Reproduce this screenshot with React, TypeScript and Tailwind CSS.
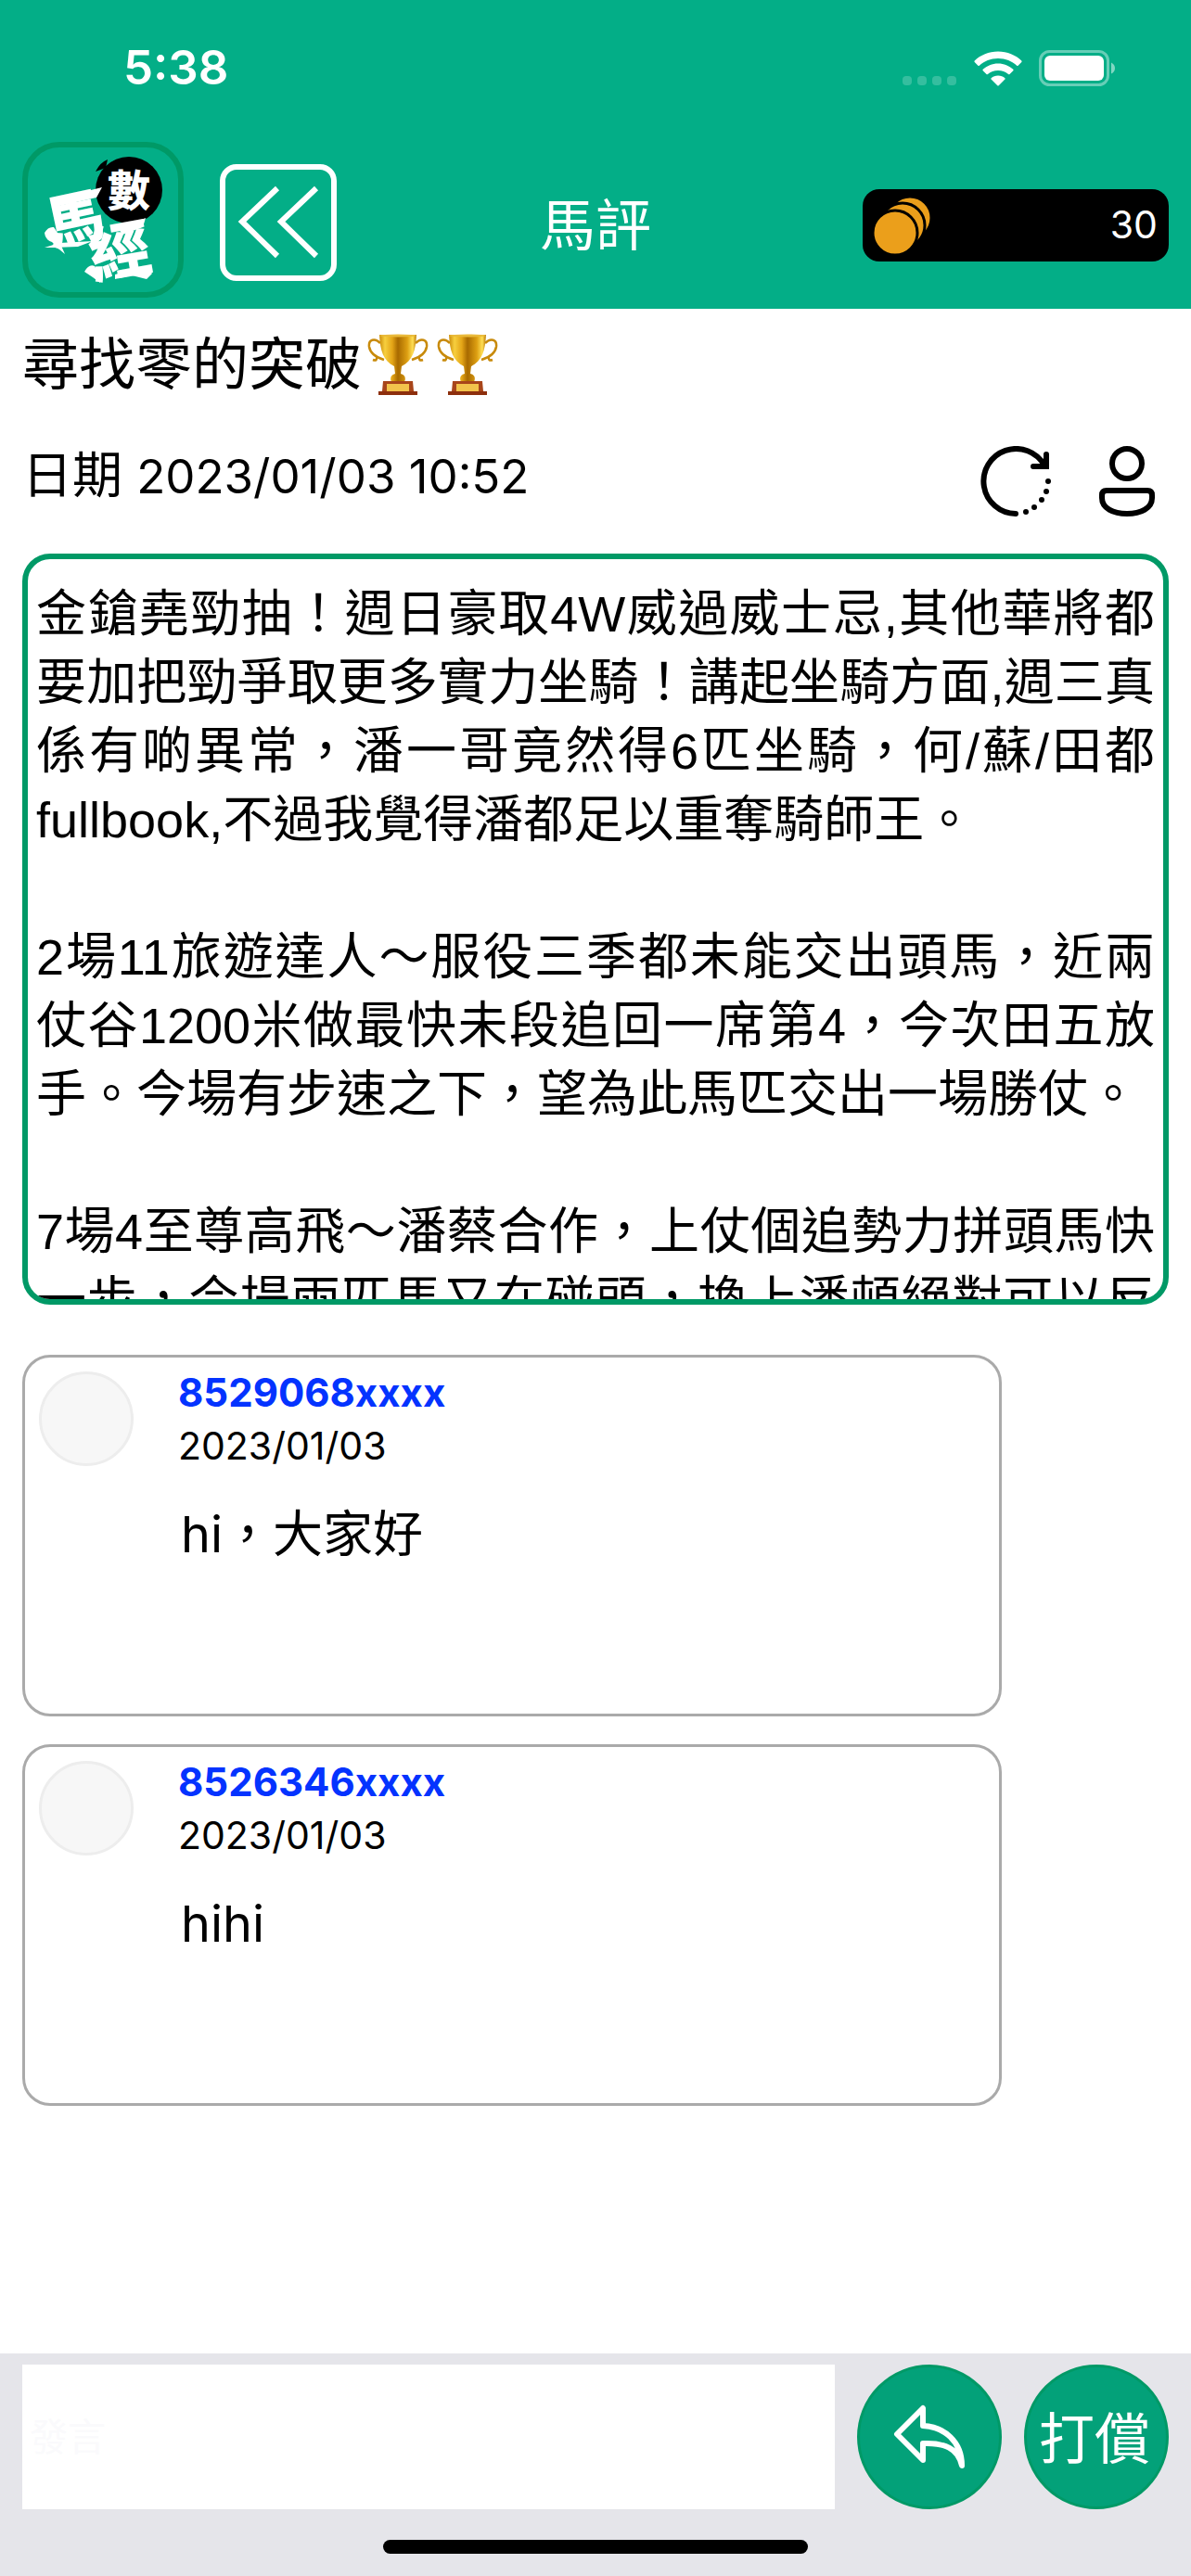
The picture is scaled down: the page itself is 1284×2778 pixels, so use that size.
import { useState } from "react";

interface IComment {
  id: number;
  author: string;
  date: string;
  message: string;
}

const comments: IComment[] = [
  { id: 1, author: "8529068xxxx", date: "2023/01/03", message: "hi，大家好" },
  { id: 2, author: "8526346xxxx", date: "2023/01/03", message: "hihi" },
];

const article = `金鎗堯勁抽！週日豪取4W威過威士忌,其他華將都要加把勁爭取更多實力坐騎！講起坐騎方面,週三真係有啲異常，潘一哥竟然得6匹坐騎，何/蘇/田都fullbook,不過我覺得潘都足以重奪騎師王。

2場11旅遊達人～服役三季都未能交出頭馬，近兩仗谷1200米做最快未段追回一席第4，今次田五放手。今場有步速之下，望為此馬匹交出一場勝仗。

7場4至尊高飛～潘蔡合作，上仗個追勢力拼頭馬快一步，今場兩匹馬又在碰頭，換上潘頓絕對可以反勝。`;

function StatusBar() {
  return (
    <div className="flex h-[147px] items-center justify-between pr-20 pl-[133px]">
      <span className="text-[51px] font-semibold">5:38</span>
      <div className="flex items-center">
        <svg className="h-10 w-[60px]" viewBox="0 0 60 40" fill="#fff" fillOpacity="0.2">
          <rect x="1" y="28" width="10" height="10" rx="4" />
          <rect x="17" y="28" width="10" height="10" rx="4" />
          <rect x="33" y="28" width="10" height="10" rx="4" />
          <rect x="49" y="28" width="10" height="10" rx="4" />
        </svg>
        <svg className="ml-[18px] h-[38px] w-[52px]" viewBox="0 0 52 38" fill="#fff">
          <path d="M26 0.5C36 0.5 45 4.400 51.300 10.500Q52 11.300 51.300 12L47.600 15.700Q46.900 16.300 46.200 15.700C41 11 34 8 26 8S11 11 5.800 15.700Q5.100 16.300 4.400 15.700L0.700 12Q0 11.300 0.700 10.500C7 4.400 16 0.500 26 0.500Z" />
          <path d="M26 13.500C32.400 13.500 38 16 42.300 19.800Q43 20.500 42.300 21.200L38.500 25Q37.800 25.600 37.100 25C34 22.500 30.200 21 26 21S18 22.500 14.900 25Q14.200 25.600 13.500 25L9.700 21.200Q9 20.500 9.700 19.800C14 16 19.600 13.500 26 13.500Z" />
          <path d="M26 26.500C28.900 26.500 31.400 27.500 33.400 29.200Q34.100 29.900 33.400 30.600L26.700 37.200Q26 37.800 25.300 37.200L18.600 30.600Q17.900 29.900 18.600 29.200C20.600 27.500 23.100 26.500 26 26.500Z" />
        </svg>
        <svg className="ml-[18px] h-10 w-[84px]" viewBox="0 0 84 40">
          <rect x="1.500" y="1.500" width="73" height="36" rx="10" fill="none" stroke="#fff" strokeOpacity="0.4" strokeWidth="3" />
          <rect x="6" y="6" width="64" height="27" rx="6" fill="#fff" />
          <path d="M78 13.500Q82 15.500 82 19.500T78 25.500Z" fill="#fff" fillOpacity="0.5" />
        </svg>
      </div>
    </div>
  );
}

function Logo() {
  return (
    <a
      href="#home"
      aria-label="數馬經"
      className="flex h-[168px] w-[174px] items-center justify-center rounded-[40px] border-6 border-[#009966]"
    >
      <svg viewBox="6 6 162 156" className="h-full w-full" fontWeight="900" textAnchor="middle">
        <circle cx="115" cy="52" r="36" fill="#000" />
        <path d="M79 32Q84 22 92 19L90 28Z" fill="#000" />
        <text x="115" y="69" fontSize="46" fill="#fff">數</text>
        <g fill="#fff">
          <text x="57" y="106" fontSize="62" transform="rotate(-12 57 85)">馬</text>
          <text x="105" y="142" fontSize="66" transform="rotate(-10 105 117)">經</text>
          {/* brush flicks around the lettering */}
          <path d="M33 61L62 55L86 49L80 60L36 70Z" />
          <path d="M24 98Q28 91 34 92L38 98L42 112L46 121L40 116L32 108Q25 106 24 98Z" />
          <path d="M24 114L40 109L76 107L60 113L34 114Z" />
          <path d="M104 94L133 82L130 92L108 100Z" />
          <path d="M100 143L134 134L140 142L134 148L118 144L100 148Z" />
          <path d="M67 140Q72 131 78 134L82 142L84 152L76 146Z" />
        </g>
      </svg>
    </a>
  );
}

function Trophy() {
  return (
    <svg viewBox="0 0 66 66" className="h-[66px] w-[66px]">
      <defs>
        <linearGradient id="cup" x1="0" x2="1">
          <stop offset="0" stopColor="#c98a0a" />
          <stop offset="0.150" stopColor="#f7cf3e" />
          <stop offset="0.350" stopColor="#e3a416" />
          <stop offset="0.500" stopColor="#a86a00" />
          <stop offset="0.750" stopColor="#dd9f12" />
          <stop offset="0.900" stopColor="#ffdf55" />
          <stop offset="1" stopColor="#b87400" />
        </linearGradient>
      </defs>
      <g fill="none" stroke="#c88a0b" strokeWidth="2.500">
        <path d="M14 10C8 4 1 6 2 14C3 20 8 25 18 28M6 28Q11 30 10 24" />
        <path d="M52 10C58 4 65 6 64 14C63 20 58 25 48 28M60 28Q55 30 56 24" />
      </g>
      <path d="M13 1H53C52 18 49 29 37 35L36 43Q43 45 40 52H26Q23 45 30 43L29 35C17 29 14 18 13 1Z" fill="url(#cup)" />
      <ellipse cx="33" cy="2" rx="20" ry="1.500" fill="#e9b93a" />
      <path d="M17 51H49L50 62H16Z" fill="#a8451a" />
      <path d="M12 62H54V66H12Z" fill="#8d2f0d" />
      <path d="M21 54H45V62H21Z" fill="#f2c34c" />
    </svg>
  );
}

function CoinsIcon() {
  return (
    <svg viewBox="0 0 66 66" className="h-[66px] w-[66px]" fill="#eb9f1b" stroke="#000" strokeWidth="3">
      <circle cx="43" cy="25" r="23" />
      <circle cx="35" cy="33" r="24" />
      <circle cx="27" cy="41" r="24" />
    </svg>
  );
}

function CommentCard({ comment }: { comment: IComment }) {
  return (
    <article className="flex min-h-[390px] gap-12 rounded-[30px] border-3 border-[#aaaaaa] p-[15px]">
      <div className="h-[102px] w-[102px] shrink-0 rounded-full border-3 border-[#ededed] bg-[#f7f7f7]" />
      <div>
        <h3 className="text-[42px] leading-[46px] font-bold text-[#0433ff]">
          {comment.author}
        </h3>
        <p className="mt-2.5 text-[41px] leading-[48px]">{comment.date}</p>
        <p className="mt-10 pl-[3px] text-[54px] leading-[64px]">{comment.message}</p>
      </div>
    </article>
  );
}

function App() {
  const [reply, setReply] = useState("");

  return (
    <div className="flex min-h-screen flex-col bg-white font-[Inter,'Noto_Sans_CJK_TC',sans-serif] text-black">
      <header className="bg-[#03ae87] text-white">
        <StatusBar />
        <div className="mt-1.5 grid h-[180px] grid-cols-[1fr_auto_1fr] items-center px-6">
          <div className="flex items-start gap-[39px] self-start">
            <Logo />
            <button
              aria-label="返回"
              className="mt-6 h-[126px] w-[126px] rounded-[18px] border-6 border-white"
            >
              <svg viewBox="6 6 114 114" className="h-full w-full" fill="none" stroke="#fff" strokeWidth="6">
                <path d="M62 26L24 62L62 99M104 26L66 62L104 99" />
              </svg>
            </button>
          </div>
          <h1 className="text-[60px]">馬評</h1>
          <div className="flex h-[78px] w-[330px] items-center justify-between justify-self-end rounded-[18px] bg-black pr-3 pl-2">
            <CoinsIcon />
            <span className="text-[41px]">30</span>
          </div>
        </div>
      </header>

      <main className="flex-1 px-6 pt-6 pb-6">
        <h2 className="flex items-center text-[61px] leading-[72px]">
          尋找零的突破
          <span className="ml-1.5 flex gap-[9px]">
            <Trophy />
            <Trophy />
          </span>
        </h2>

        <div className="mt-[52px] flex items-start justify-between pr-3.5">
          <p className="text-[54px] leading-[64px]">
            日期 <time className="text-[51px]">2023/01/03 10:52</time>
          </p>
          <div className="flex gap-[51px]">
            <button aria-label="重新整理">
              <svg viewBox="0 0 76 76" className="h-[76px] w-[76px]" fill="none" stroke="#000" strokeWidth="6" strokeLinecap="round">
                <path d="M38 73A35 35 0 1 1 69 21" />
                <path d="M71 9V22H57" />
                <g fill="#000" stroke="none">
                  <circle cx="73" cy="38" r="3" />
                  <circle cx="71" cy="49" r="3" />
                  <circle cx="66" cy="58" r="3" />
                  <circle cx="58" cy="66" r="3" />
                  <circle cx="49" cy="71" r="3" />
                </g>
              </svg>
            </button>
            <button aria-label="會員">
              <svg viewBox="0 0 62 76" className="h-[76px] w-[62px]" fill="none" stroke="#000" strokeWidth="6">
                <circle cx="31" cy="19" r="16" />
                <path d="M9 48H53Q58 48 58 53V56C58 67 46 73 31 73S4 67 4 56V53Q4 48 9 48Z" />
              </svg>
            </button>
          </div>
        </div>

        <div className="mt-10 h-[810px] overflow-hidden rounded-[30px] border-6 border-[#009966] px-[9px] pt-[22px]">
          <p className="text-justify font-['Liberation_Sans','Noto_Sans_CJK_TC',sans-serif] text-[54px] leading-[74px] whitespace-pre-line">
            {article}
          </p>
        </div>

        <section className="mt-[54px] flex flex-col gap-[30px] pr-[180px]">
          {comments.map((comment: IComment) => {
            return <CommentCard key={comment.id} comment={comment} />;
          })}
        </section>
      </main>

      <footer className="bg-[#e5e5ea] px-6 pt-3 pb-6">
        <form className="flex gap-6" onSubmit={(e) => e.preventDefault()}>
          <input
            aria-label="發言"
            placeholder="發言"
            value={reply}
            onChange={(e) => setReply(e.target.value)}
            className="h-[156px] min-w-0 flex-1 bg-white px-2 text-[41px] outline-none placeholder:text-[#fafafc]"
          />
          <button
            type="submit"
            aria-label="回覆"
            className="h-[156px] w-[156px] rounded-full border-3 border-[#009966] bg-[#03a179]"
          >
            <svg viewBox="3 3 150 150" className="h-full w-full" fill="none" stroke="#fff" strokeWidth="6" strokeLinejoin="round">
              <path d="M71 47V66C94 67 113 83 113 109C109 90 94 84 71 85V103L43 75Z" />
            </svg>
          </button>
          <button
            type="button"
            className="h-[156px] w-[156px] rounded-full border-3 border-[#009966] bg-[#03a179] pt-1 pr-1 text-[60px] text-white"
          >
            打償
          </button>
        </form>
        <div className="mx-auto mt-[33px] h-[15px] w-[458px] rounded-full bg-black" />
      </footer>
    </div>
  );
}

export default App;
